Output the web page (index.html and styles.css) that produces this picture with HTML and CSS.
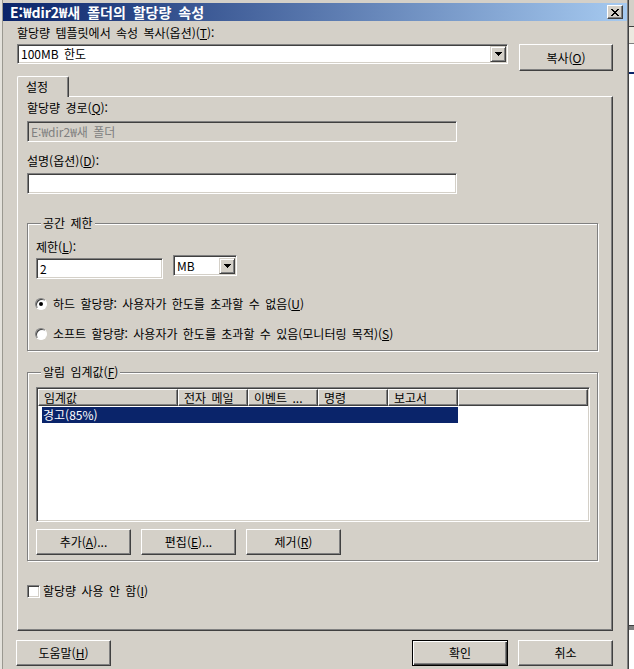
FILE: index.html
```html
<!DOCTYPE html>
<html lang="ko">
<head>
  <meta charset="UTF-8">
  <meta name="viewport" content="width=device-width, initial-scale=1.0">
  <title>E:₩dir2₩새 폴더의 할당량 속성</title>
  <link rel="stylesheet" href="styles.css">
</head>
<body>
  <div class="screen">
    <div class="behind-left"></div>

    <div class="dialog">
      <div class="titlebar">
        <span class="title">E:₩dir2₩새 폴더의 할당량 속성</span>
        <span class="close-btn">
          <svg width="8" height="7" viewBox="0 0 8 7"><path d="M0 0h2v1H0zM6 0h2v1H6zM1 1h2v1H1zM5 1h2v1H5zM2 2h4v1H2zM3 3h2v1H3zM2 4h4v1H2zM1 5h2v1H1zM5 5h2v1H5zM0 6h2v1H0zM6 6h2v1H6z" fill="#000"/></svg>
        </span>
      </div>

      <div class="content">
        <div class="template-row">
          <div class="template-field">
            <div class="label">할당량 템플릿에서 속성 복사(옵션)(<u>T</u>):</div>
            <div class="combo template-combo">
              <span class="combo-text">100MB 한도</span>
              <span class="drop-btn"><svg width="7" height="4" viewBox="0 0 7 4"><path d="M0 0h7v1H0zM1 1h5v1H1zM2 2h3v1H2zM3 3h1v1H3z" fill="#000"/></svg></span>
            </div>
          </div>
          <button class="btn copy-btn">복사(<u>O</u>)</button>
        </div>

        <div class="tabs">
          <div class="tab">설정</div>
        </div>

        <div class="panel">
          <div class="label first">할당량 경로(<u>Q</u>):</div>
          <div class="field path-field disabled">E:₩dir2₩새 폴더</div>

          <div class="label spaced">설명(옵션)(<u>D</u>):</div>
          <div class="field desc-field"></div>

          <fieldset class="group space-group">
            <legend>공간 제한</legend>
            <div class="label limit-label">제한(<u>L</u>):</div>
            <div class="limit-row">
              <div class="field limit-field">2</div>
              <div class="combo unit-combo">
                <span class="combo-text">MB</span>
                <span class="drop-btn"><svg width="7" height="4" viewBox="0 0 7 4"><path d="M0 0h7v1H0zM1 1h5v1H1zM2 2h3v1H2zM3 3h1v1H3z" fill="#000"/></svg></span>
              </div>
            </div>
            <div class="radio-row first-radio">
              <span class="radio checked"></span>
              <span>하드 할당량: 사용자가 한도를 초과할 수 없음(<u>U</u>)</span>
            </div>
            <div class="radio-row">
              <span class="radio"></span>
              <span>소프트 할당량: 사용자가 한도를 초과할 수 있음(모니터링 목적)(<u>S</u>)</span>
            </div>
          </fieldset>

          <fieldset class="group alert-group">
            <legend>알림 임계값(<u>F</u>)</legend>
            <div class="listview">
              <div class="lv-header">
                <div class="lv-col col-threshold">임계값</div>
                <div class="lv-col">전자 메일</div>
                <div class="lv-col">이벤트 ...</div>
                <div class="lv-col">명령</div>
                <div class="lv-col">보고서</div>
                <div class="lv-col lv-rest"></div>
              </div>
              <div class="lv-row selected">경고(85%)</div>
            </div>
            <div class="button-row">
              <button class="btn">추가(<u>A</u>)...</button>
              <button class="btn">편집(<u>E</u>)...</button>
              <button class="btn">제거(<u>R</u>)</button>
            </div>
          </fieldset>

          <div class="check-row">
            <span class="checkbox"></span>
            <span>할당량 사용 안 함(<u>I</u>)</span>
          </div>
        </div>

        <div class="footer">
          <button class="btn">도움말(<u>H</u>)</button>
          <button class="btn default-btn">확인</button>
          <button class="btn">취소</button>
        </div>
      </div>
    </div>

    <div class="behind-right">
      <div class="br-top"></div>
      <div class="br-bar"></div>
      <div class="br-blue"></div>
      <div class="br-fill"></div>
      <div class="br-bottom"></div>
    </div>
  </div>
</body>
</html>
```

FILE: styles.css
```css
html, body {
  margin: 0;
  padding: 0;
}
body {
  background: #fff;
  color: #000;
  font-family: "Noto Sans CJK KR", "Liberation Sans", sans-serif;
  font-size: 12px;
  line-height: 14px;
  word-spacing: 2px;
}
u {
  text-underline-offset: 1px;
}
.screen {
  display: flex;
  height: 669px;
  overflow: hidden;
}
.behind-left {
  width: 2px;
  background: #e4e2dc;
}
.dialog {
  width: 627px;
  box-sizing: border-box;
  padding-top: 3px;
  background: #d4d0c8;
  border-left: 1px solid #9a9890;
  border-right: 1px solid #404040;
  box-shadow: inset -1px 0 #808080;
}

/* title bar */
.titlebar {
  height: 18px;
  margin-right: 1px;
  padding: 0 4px 0 7px;
  display: flex;
  align-items: center;
  justify-content: space-between;
  background: linear-gradient(to right, #0a246a, #a6caf0);
}
.title {
  color: #fff;
  font-weight: bold;
  font-size: 14px;
  word-spacing: 3px;
}
.close-btn {
  width: 16px;
  height: 14px;
  box-sizing: border-box;
  display: flex;
  align-items: center;
  justify-content: center;
  background: #d4d0c8;
  border: 1px solid;
  border-color: #fff #404040 #404040 #fff;
  box-shadow: inset -1px -1px #808080;
}

.content {
  padding-left: 14px;
}

/* shared controls */
.label {
  height: 14px;
  white-space: nowrap;
}
.field,
.combo {
  box-sizing: border-box;
  background: #fff;
  border: 1px solid;
  border-color: #808080 #fff #fff #808080;
  box-shadow: inset 1px 1px #404040, inset -1px -1px #d4d0c8;
}
.field {
  height: 21px;
  padding: 3px 0 0 3px;
}
.field.disabled {
  background: #d4d0c8;
  color: #808080;
}
.combo {
  display: flex;
  align-items: center;
  padding: 1px 1px 1px 3px;
}
.drop-btn {
  margin-left: auto;
  width: 16px;
  height: 16px;
  box-sizing: border-box;
  display: flex;
  align-items: center;
  justify-content: center;
  background: #d4d0c8;
  border: 1px solid;
  border-color: #d4d0c8 #404040 #404040 #d4d0c8;
  box-shadow: inset 1px 1px #fff, inset -1px -1px #808080;
}
.btn {
  width: 95px;
  height: 26px;
  box-sizing: border-box;
  padding: 0;
  font: inherit;
  word-spacing: inherit;
  color: #000;
  background: #d4d0c8;
  border: 1px solid;
  border-color: #fff #404040 #404040 #fff;
  box-shadow: inset -1px -1px #808080;
}

/* template row */
.template-row {
  display: flex;
  align-items: flex-start;
  gap: 11px;
  margin-top: 5px;
}
.template-combo {
  width: 491px;
  height: 20px;
  margin-top: 4px;
}
.copy-btn {
  width: 94px;
  height: 27px;
  margin-top: 18px;
}

/* tab */
.tabs {
  display: flex;
  margin-top: 5px;
}
.tab {
  position: relative;
  z-index: 1;
  width: 52px;
  height: 21px;
  box-sizing: border-box;
  margin-bottom: -1px;
  padding: 3px 0 0 8px;
  background: #d4d0c8;
  border-top: 1px solid #fff;
  border-left: 1px solid #fff;
  border-right: 1px solid #404040;
  border-radius: 2px 2px 0 0;
  box-shadow: inset -1px 0 #808080;
}
.panel {
  width: 596px;
  height: 535px;
  box-sizing: border-box;
  padding-left: 9px;
  border: 1px solid;
  border-color: #fff #404040 #404040 #fff;
  box-shadow: inset -1px -1px #808080;
}
.label.first {
  margin-top: 4px;
}
.path-field,
.desc-field {
  width: 430px;
}
.path-field {
  margin-top: 6px;
}
.label.spaced {
  margin-top: 12px;
}
.desc-field {
  margin-top: 5px;
}

/* group boxes */
.group {
  width: 571px;
  box-sizing: border-box;
  margin: 0;
  padding: 0 8px;
  min-inline-size: 0;
  border: 1px solid #808080;
  box-shadow: inset 1px 1px #fff, 1px 1px #fff;
}
.group legend {
  margin-left: 5px;
  padding: 0 2px;
  height: 14px;
  line-height: 14px;
  background: #d4d0c8;
}
.space-group {
  margin-top: 22px;
  padding-bottom: 8px;
}
.limit-label {
  margin-top: 10px;
}
.limit-row {
  display: flex;
  align-items: flex-start;
  gap: 10px;
  margin-top: 1px;
}
.limit-field {
  width: 127px;
  margin-top: 3px;
}
.unit-combo {
  width: 64px;
  height: 21px;
}
.radio-row {
  display: flex;
  align-items: center;
  gap: 6px;
  height: 16px;
  margin-top: 14px;
  margin-left: -1px;
  white-space: nowrap;
}
.radio-row.first-radio {
  margin-top: 17px;
}
.radio {
  position: relative;
  width: 12px;
  height: 12px;
  box-sizing: border-box;
  border-radius: 50%;
  background: #fff;
  border: 1px solid;
  border-color: #808080 #fff #fff #808080;
  box-shadow: inset 1px 1px #404040;
}
.radio.checked::after {
  content: "";
  position: absolute;
  left: 3px;
  top: 3px;
  width: 4px;
  height: 4px;
  border-radius: 50%;
  background: #000;
}

.alert-group {
  margin-top: 14px;
  padding-bottom: 5px;
}
.listview {
  width: 554px;
  height: 135px;
  box-sizing: border-box;
  margin-top: 8px;
  background: #fff;
  border: 1px solid;
  border-color: #808080 #fff #fff #808080;
  box-shadow: inset 1px 1px #404040, inset -1px -1px #d4d0c8;
  padding: 1px;
}
.lv-header {
  display: flex;
  height: 17px;
}
.lv-col {
  width: 70px;
  box-sizing: border-box;
  padding: 1px 0 0 5px;
  white-space: nowrap;
  overflow: hidden;
  background: #d4d0c8;
  border: 1px solid;
  border-color: #fff #404040 #404040 #fff;
  box-shadow: inset -1px -1px #808080;
}
.lv-col.col-threshold {
  width: 140px;
}
.lv-col.lv-rest {
  flex: 1;
}
.lv-row {
  width: 416px;
  height: 16px;
  box-sizing: border-box;
  margin: 1px 0 0 4px;
  padding: 1px 0 0 1px;
}
.lv-row.selected {
  background: #0a246a;
  color: #fff;
}
.button-row {
  display: flex;
  gap: 10px;
  margin-top: 7px;
}

/* checkbox */
.check-row {
  display: flex;
  align-items: center;
  gap: 3px;
  height: 16px;
  margin-top: 22px;
}
.checkbox {
  width: 13px;
  height: 13px;
  box-sizing: border-box;
  background: #fff;
  border: 1px solid;
  border-color: #808080 #fff #fff #808080;
  box-shadow: inset 1px 1px #404040, inset -1px -1px #d4d0c8;
}

/* footer buttons */
.footer {
  width: 596px;
  display: flex;
  gap: 10px;
  margin-top: 9px;
}
.footer .btn:first-child {
  margin-left: -1px;
}
.default-btn {
  width: 96px;
  margin-left: auto;
  border-color: #000;
  box-shadow: inset 1px 1px #fff, inset -1px -1px #404040, inset -2px -2px #808080;
}

/* window behind the dialog */
.behind-right {
  flex: 1;
  display: flex;
  flex-direction: column;
  background: #fff;
}
.br-top {
  height: 26px;
  background: #d4d0c8;
  border-bottom: 1px solid #404040;
}
.br-bar {
  height: 16px;
  background: #ece9e0;
  border-bottom: 1px solid #808080;
}
.br-blue {
  height: 2px;
  margin-top: 28px;
  background: #0a246a;
}
.br-fill {
  flex: 1;
}
.br-bottom {
  height: 4px;
  margin-bottom: 39px;
  background: #808080;
  border-top: 1px solid #404040;
}
```
